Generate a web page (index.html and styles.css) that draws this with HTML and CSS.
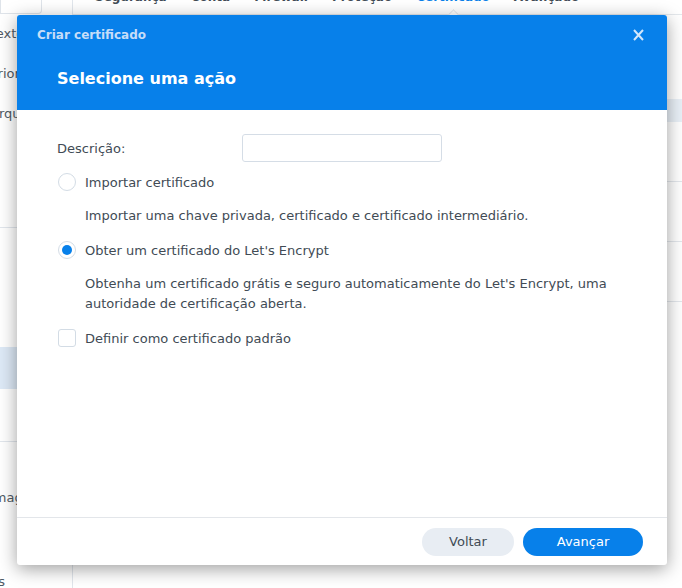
FILE: index.html
```html
<!DOCTYPE html>
<html lang="pt">
<head>
<meta charset="utf-8">
<title>Criar certificado</title>
<link rel="stylesheet" href="styles.css">
</head>
<body>
<div class="app">
  <aside class="sidebar">
    <div class="side-top"></div>
    <div class="side-item">Texto c</div>
    <div class="side-item">Prioridad</div>
    <div class="side-item">Arquivo</div>
    <div class="side-sep s1"></div>
    <div class="side-sel"></div>
    <div class="side-item small">Info</div>
    <div class="side-sep s2"></div>
    <div class="side-item lower">Imag</div>
    <div class="side-item lower2">Ss</div>
  </aside>
  <main class="content">
    <nav class="tabs">
      <span class="tab">Segurança</span>
      <span class="tab">Conta</span>
      <span class="tab">Firewall</span>
      <span class="tab">Proteção</span>
      <span class="tab active">Certificado</span>
      <span class="tab">Avançado</span>
    </nav>
    <div class="table">
      <div class="thead"></div>
      <div class="row r1"></div>
      <div class="row"></div>
      <div class="row"></div>
    </div>
  </main>
</div>

<div class="dialog">
  <header class="dlg-head">
    <div class="dlg-titlebar">
      <span class="dlg-title">Criar certificado</span>
      <svg class="dlg-close" width="11" height="12" viewBox="0 0 11 12" aria-label="Fechar">
        <path d="M1 1 L10 11 M10 1 L1 11" stroke="#d3e6fb" stroke-width="2" fill="none"/>
      </svg>
    </div>
    <h1 class="dlg-heading">Selecione uma ação</h1>
  </header>
  <section class="dlg-body">
    <div class="field">
      <label class="field-label">Descrição:</label>
      <input class="field-input" type="text">
    </div>
    <div class="option">
      <span class="radio"></span>
      <span class="opt-label">Importar certificado</span>
    </div>
    <p class="opt-desc">Importar uma chave privada, certificado e certificado intermediário.</p>
    <div class="option">
      <span class="radio checked"></span>
      <span class="opt-label">Obter um certificado do Let's Encrypt</span>
    </div>
    <p class="opt-desc">Obtenha um certificado grátis e seguro automaticamente do Let's Encrypt, uma autoridade de certificação aberta.</p>
    <div class="option">
      <span class="checkbox"></span>
      <span class="opt-label">Definir como certificado padrão</span>
    </div>
  </section>
  <footer class="dlg-foot">
    <button class="btn btn-back">Voltar</button>
    <button class="btn btn-next">Avançar</button>
  </footer>
</div>
</body>
</html>
```

FILE: styles.css
```css
* { box-sizing: border-box; }
html, body { margin: 0; padding: 0; }
body {
  width: 682px;
  height: 588px;
  overflow: hidden;
  background: #ffffff;
  font-family: "DejaVu Sans", Verdana, sans-serif;
  color: #414b55;
  position: relative;
}

.app {
  display: flex;
  height: 588px;
}
.sidebar {
  width: 73px;
  flex: none;
  border-right: 1px solid #e1e6ec;
  position: relative;
  font-size: 13px;
  color: #505a64;
  overflow: hidden;
}
.side-top {
  height: 14px;
  margin-right: 30px;
  border: 1px solid #dfe4ea;
  border-top: none;
  border-radius: 0 0 4px 0;
}
.side-item {
  height: 40px;
  line-height: 40px;
  white-space: nowrap;
  text-indent: -10px;
}
.side-item.small { text-indent: -30px; }
.side-sep { height: 1px; background: #e1e6ec; }
.s1 { margin-top: 93px; }
.side-sel { margin-top: 119px; height: 42px; background: #dde9f6; }
.s2 { margin-top: 12px; }
.lower { margin-top: 36px; }
.lower2 { margin-top: 44px; }

.content {
  flex: 1;
  display: flex;
  flex-direction: column;
}
.tabs {
  display: flex;
  gap: 24px;
  padding-left: 22px;
  margin-top: -10px;
  height: 25px;
  font-size: 12px;
  font-weight: bold;
  color: #414b55;
  border-bottom: 1px solid #e4e8ec;
}
.tab { position: relative; }
.tab.active { color: #0a7fe8; }
.tab.active::after {
  content: "";
  position: absolute;
  left: 50%;
  bottom: -6px;
  width: 8px;
  height: 8px;
  margin-left: -4px;
  background: #fff;
  border-left: 1px solid #e4e8ec;
  border-top: 1px solid #e4e8ec;
  transform: rotate(45deg);
}
.table { margin-top: 84px; }
.thead { height: 23px; background: #e9f0f7; }
.row { height: 60px; border-bottom: 1px solid #e3e7ec; }

.dialog {
  position: absolute;
  left: 17px;
  top: 15px;
  width: 650px;
  height: 550px;
  background: #ffffff;
  border-radius: 3px;
  box-shadow: 0 4px 18px rgba(0, 0, 0, 0.38);
  display: flex;
  flex-direction: column;
  overflow: hidden;
}
.dlg-head {
  background: #0780ea;
  height: 95px;
  flex: none;
}
.dlg-titlebar {
  display: flex;
  justify-content: space-between;
  align-items: center;
  height: 40px;
  padding: 0 23px 0 20px;
}
.dlg-title {
  font-size: 12px;
  font-weight: bold;
  color: #c6ddf8;
}
.dlg-close { display: block; }
.dlg-heading {
  margin: 14px 0 0 40px;
  font-size: 16px;
  font-weight: bold;
  color: #ffffff;
}

.dlg-body {
  flex: 1;
  padding: 24px 40px 0 40px;
  font-size: 13px;
}
.field {
  display: flex;
  align-items: center;
  height: 28px;
}
.field-label { width: 185px; }
.field-input {
  width: 200px;
  height: 28px;
  border: 1px solid #d5dde6;
  border-radius: 3px;
  outline: none;
  background: #fff;
}
.option {
  display: flex;
  align-items: center;
  gap: 9px;
  margin-top: 11px;
  height: 18px;
  padding-left: 1px;
}
.radio {
  width: 18px;
  height: 18px;
  border-radius: 50%;
  border: 1px solid #d3dce5;
  flex: none;
  position: relative;
}
.radio.checked::after {
  content: "";
  position: absolute;
  left: 3px;
  top: 3px;
  width: 10px;
  height: 10px;
  border-radius: 50%;
  background: #0780ea;
}
.checkbox {
  width: 18px;
  height: 18px;
  border-radius: 3px;
  border: 1px solid #d3dce5;
  flex: none;
}
.opt-desc {
  margin: 15px 0 15px 28px;
  line-height: 20px;
}

.dlg-foot {
  flex: none;
  height: 48px;
  border-top: 1px solid #e3e6ea;
  display: flex;
  justify-content: flex-end;
  align-items: center;
  gap: 9px;
  padding-right: 24px;
}
.btn {
  height: 28px;
  border: none;
  border-radius: 14px;
  font-family: "DejaVu Sans", Verdana, sans-serif;
  font-size: 13px;
  padding: 0;
}
.btn-back { width: 92px; background: #e8edf3; color: #414b55; }
.btn-next { width: 120px; background: #0780ea; color: #ffffff; }
```
